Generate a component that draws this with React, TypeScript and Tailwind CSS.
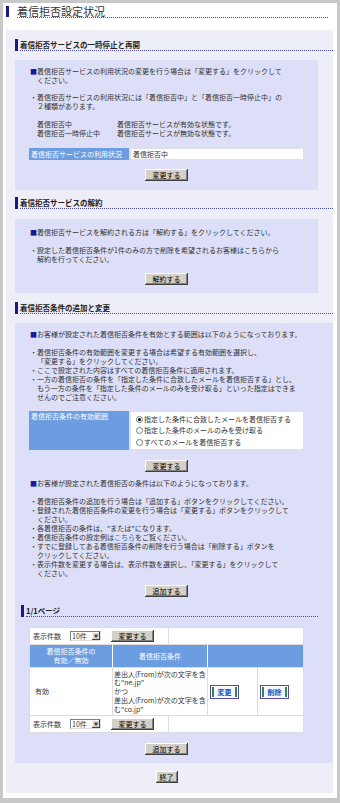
import React from "react";

const Mark = ({ mark = "・", children }: { mark?: string; children: React.ReactNode }) => (
  <div className="flex">
    <span className={mark === "■" ? "w-[7px] shrink-0 text-[#1a1a9a]" : "w-[7px] shrink-0"}>{mark}</span>
    <span className="whitespace-nowrap">{children}</span>
  </div>
);

const Btn = ({ children, w = "w-[43px]" }: { children: React.ReactNode; w?: string }) => (
  <button
    className={`${w} h-[12px] bg-[#d4d0c8] text-[7px] leading-[12px] text-black shadow-[inset_-1px_-1px_0_#404040,inset_1px_1px_0_#ffffff,inset_-2px_-2px_0_#808080]`}
  >
    {children}
  </button>
);

const BtnRow = ({ children }: { children: React.ReactNode }) => (
  <div className="w-[275px] flex justify-center">{children}</div>
);

const Heading = ({ title, className = "" }: { title: string; className?: string }) => (
  <div className={`flex h-[12px] ${className}`}>
    <div className="w-[3px] h-[12px] bg-[#1a1a80]" />
    <div className="ml-[2px] flex-1 h-[12px] border-b border-dotted border-[#4a4aa8] text-[7.5px] font-bold leading-[11px] text-[#222]">
      {title}
    </div>
  </div>
);

const Radio = ({ checked = false, label }: { checked?: boolean; label: string }) => (
  <div className="flex items-center h-[11.5px]">
    <span className="w-[7px] h-[7px] rounded-full border border-[#7a7a7a] bg-white flex items-center justify-center">
      {checked && <span className="w-[3px] h-[3px] rounded-full bg-black" />}
    </span>
    <span className="ml-[1px] whitespace-nowrap">{label}</span>
  </div>
);

const Select = () => (
  <div className="w-[31px] h-[10px] bg-white border border-t-[#808080] border-l-[#808080] border-r-[#e0e0e0] border-b-[#e0e0e0] flex items-center">
    <span className="flex-1 pl-[1px] text-[7px] leading-[8px]">10件</span>
    <span className="w-[8px] h-[8px] bg-[#d4d0c8] shadow-[inset_-1px_-1px_0_#404040,inset_1px_1px_0_#ffffff] flex items-center justify-center text-[4px] leading-none">
      ▼
    </span>
  </div>
);

const CountRow = () => (
  <div className="flex h-[16px]">
    <div className="w-[139px] border-r border-[#dcdcdc] flex items-center pl-[3px]">
      <span className="w-[37px]">表示件数</span>
      <Select />
      <span className="ml-[10px]">
        <Btn>変更する</Btn>
      </span>
    </div>
    <div className="flex-1" />
  </div>
);

const ImgBtn = ({ label }: { label: string }) => (
  <span className="w-[29px] h-[14px] border border-[#5a48a8] p-[1px] bg-white flex">
    <span className="flex-1 border-x-2 border-[#2e8b57] bg-[#f2f6ff] text-[#2050c0] font-bold text-[7px] leading-[10px] flex items-center justify-center">
      {label}
    </span>
  </span>
);

export default function App() {
  return (
    <div className="w-[340px] h-[803px] bg-[#c8c8c8] pt-[3px] px-[3px] pb-[5px] font-['Noto_Sans_CJK_JP',sans-serif] text-[#333] text-[7px] leading-[9px]">
      <div className="h-full bg-white pt-[3px]">
        <div className="flex h-[12px]">
          <div className="ml-[3px] w-[3px] h-[11px] bg-[#1a1a80]" />
          <div className="ml-[8px] mr-[9px] flex-1 h-[12px] border-b border-dotted border-[#4a4aa8] text-[11px] leading-[11px] text-[#333]">
            着信拒否設定状況
          </div>
        </div>

        <div className="ml-[3px] mt-[12px] w-[327px] h-[763px] bg-[#eeeef8] pl-[9px] pt-[9px]">
          <Heading title="着信拒否サービスの一時停止と再開" />

          <div className="mt-[9px] w-[303px] bg-[#dcdff7] pl-[14px] pt-[7px] pb-[9px]">
            <div className="ml-[1px]">
              <Mark mark="■">
                着信拒否サービスの利用状況の変更を行う場合は「変更する」をクリックして
                <br />
                ください。
              </Mark>
              <div className="mt-[8px]">
                <Mark>
                  着信拒否サービスの利用状況には「着信拒否中」と「着信拒否一時停止中」の
                  <br />
                  ２種類があります。
                </Mark>
              </div>
              <div className="mt-[9px] ml-[7px] grid grid-cols-[80px_1fr]">
                <span>着信拒否中</span>
                <span>着信拒否サービスが有効な状態です。</span>
                <span>着信拒否一時停止中</span>
                <span>着信拒否サービスが無効な状態です。</span>
              </div>
            </div>
            <div className="mt-[10px] w-[275px] h-[12px] flex">
              <div className="w-[100px] bg-[#6c9de0] text-white pl-[2px] leading-[12px]">着信拒否サービスの利用状況</div>
              <div className="ml-[1px] flex-1 bg-white border border-[#e0e0e0] pl-[2px] leading-[10px]">着信拒否中</div>
            </div>
            <div className="mt-[9px]">
              <BtnRow>
                <Btn>変更する</Btn>
              </BtnRow>
            </div>
          </div>

          <Heading title="着信拒否サービスの解約" className="mt-[7px]" />

          <div className="mt-[10px] w-[303px] bg-[#dcdff7] pl-[14px] pt-[9px] pb-[8px]">
            <div className="ml-[1px]">
              <Mark mark="■">着信拒否サービスを解約される方は「解約する」をクリックしてください。</Mark>
              <div className="mt-[9px]">
                <Mark>
                  設定した着信拒否条件が1件のみの方で削除を希望されるお客様はこちらから
                  <br />
                  解約を行ってください。
                </Mark>
              </div>
            </div>
            <div className="mt-[9px]">
              <BtnRow>
                <Btn>解約する</Btn>
              </BtnRow>
            </div>
          </div>

          <Heading title="着信拒否条件の追加と変更" className="mt-[9px]" />

          <div className="mt-[9px] w-[318px] bg-[#dcdff7] pl-[14px] pt-[7px] pb-[8px]">
            <div className="ml-[1px]">
              <Mark mark="■">お客様が設定された着信拒否条件を有効とする範囲は以下のようになっております。</Mark>
              <div className="mt-[9px]">
                <Mark>
                  着信拒否条件の有効範囲を変更する場合は希望する有効範囲を選択し、
                  <br />
                  「変更する」をクリックしてください。
                </Mark>
                <Mark>ここで設定された内容はすべての着信拒否条件に適用されます。</Mark>
                <Mark>
                  一方の着信拒否の条件を「指定した条件に合致したメールを着信拒否する」とし、
                  <br />
                  もう一方の条件を「指定した条件のメールのみを受け取る」といった指定はできま
                  <br />
                  せんのでご注意ください。
                </Mark>
              </div>
            </div>

            <div className="mt-[9px] w-[275px] h-[39px] flex">
              <div className="w-[100px] bg-[#6c9de0] text-white pl-[2px] pt-[1px]">着信拒否条件の有効範囲</div>
              <div className="ml-[1px] flex-1 bg-white border border-[#e0e0e0] pl-[5px] pt-[1.5px]">
                <Radio checked label="指定した条件に合致したメールを着信拒否する" />
                <Radio label="指定した条件のメールのみを受け取る" />
                <Radio label="すべてのメールを着信拒否する" />
              </div>
            </div>

            <div className="mt-[10px]">
              <BtnRow>
                <Btn>変更する</Btn>
              </BtnRow>
            </div>

            <div className="ml-[1px] mt-[7px]">
              <Mark mark="■">お客様が設定された着信拒否の条件は以下のようになっております。</Mark>
              <div className="mt-[9px]">
                <Mark>着信拒否条件の追加を行う場合は「追加する」ボタンをクリックしてください。</Mark>
                <Mark>
                  登録された着信拒否条件の変更を行う場合は「変更する」ボタンをクリックして
                  <br />
                  ください。
                </Mark>
                <Mark>各着信拒否の条件は、"または"になります。</Mark>
                <Mark>
                  着信拒否条件の設定例は<span className="text-[#3366cc]">こちら</span>をご覧ください。
                </Mark>
                <Mark>
                  すでに登録してある着信拒否条件の削除を行う場合は「削除する」ボタンを
                  <br />
                  クリックしてください。
                </Mark>
                <Mark>
                  表示件数を変更する場合は、表示件数を選択し、「変更する」をクリックして
                  <br />
                  ください。
                </Mark>
              </div>
            </div>

            <div className="mt-[7px]">
              <BtnRow>
                <Btn>追加する</Btn>
              </BtnRow>
            </div>

            <Heading title="1/1ページ" className="mt-[8px] -ml-[8px] w-[297px]" />

            <div className="mt-[10px] w-[275px] border border-[#dcdcdc] bg-white">
              <CountRow />
              <div className="flex h-[23px] border-t border-[#dcdcdc] text-white text-center leading-[9px]">
                <div className="w-[83px] bg-[#6c9de0] border-r border-white flex flex-col items-center justify-center">
                  <span>着信拒否条件の</span>
                  <span>有効／無効</span>
                </div>
                <div className="w-[95px] bg-[#6c9de0] border-r border-white flex items-center justify-center">
                  着信拒否条件
                </div>
                <div className="flex-1 bg-[#6c9de0]" />
              </div>
              <div className="flex h-[48px] border-t border-[#dcdcdc]">
                <div className="w-[83px] border-r border-[#dcdcdc] flex items-center pl-[5px]">有効</div>
                <div className="w-[95px] border-r border-[#dcdcdc] flex items-center pl-[1px] leading-[8.8px] whitespace-nowrap">
                  <div>
                    差出人(From)が次の文字を含
                    <br />
                    む"ne.jp"
                    <br />
                    かつ
                    <br />
                    差出人(From)が次の文字を含
                    <br />
                    む"co.jp"
                  </div>
                </div>
                <div className="w-[50px] border-r border-[#dcdcdc] flex items-center pl-[2px]">
                  <ImgBtn label="変更" />
                </div>
                <div className="flex-1 flex items-center pl-[2px]">
                  <ImgBtn label="削除" />
                </div>
              </div>
              <div className="border-t border-[#dcdcdc]">
                <CountRow />
              </div>
            </div>

            <div className="mt-[10px]">
              <BtnRow>
                <Btn>追加する</Btn>
              </BtnRow>
            </div>
          </div>

          <div className="mt-[8px] w-[303px] flex justify-center">
            <Btn w="w-[22px]">終了</Btn>
          </div>
        </div>
      </div>
    </div>
  );
}
